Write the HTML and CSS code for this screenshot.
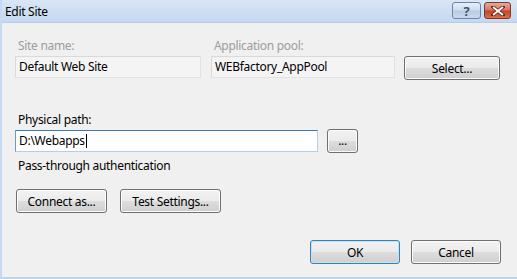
FILE: index.html
```html
<!DOCTYPE html>
<html>
  <head>
    <meta charset="utf-8">
    <title>Edit Site</title>
    <link rel="stylesheet" href="styles.css">
  </head>
  <body>
    <div class="window">
      <div class="titlebar">
        <span class="title">Edit Site</span>
        <div class="caption-btns">
          <div class="cap help">?</div>
          <div class="cap close">
            <svg width="14" height="10" viewBox="0 0 14 10">
              <path d="M2 1 L12 9 M12 1 L2 9" stroke="#5a1a10" stroke-width="3.4" stroke-linecap="square"/>
              <path d="M2 1 L12 9 M12 1 L2 9" stroke="#fff" stroke-width="2"/>
            </svg>
          </div>
        </div>
      </div>
      <div class="content">
        <div class="row top-row">
          <div class="field site">
            <div class="label disabled">Site name:</div>
            <div class="box ro">Default Web Site</div>
          </div>
          <div class="field pool">
            <div class="label disabled">Application pool:</div>
            <div class="box ro">WEBfactory_AppPool</div>
          </div>
          <button class="btn select">Select...</button>
        </div>

        <div class="label path-label">Physical path:</div>
        <div class="row path-row">
          <div class="box path">D:\Webapps<span class="caret"></span></div>
          <button class="btn dots">...</button>
        </div>
        <div class="label auth">Pass-through authentication</div>

        <div class="row conn-row">
          <button class="btn connect">Connect as...</button>
          <button class="btn test">Test Settings...</button>
        </div>

        <div class="row footer">
          <button class="btn ok">OK</button>
          <button class="btn cancel">Cancel</button>
        </div>
      </div>
    </div>
  </body>
</html>
```

FILE: styles.css
```css
* {
  margin: 0;
  padding: 0;
  box-sizing: border-box;
}
body {
  background: #f0f0f0;
  font-family: "Noto Sans", "Open Sans", sans-serif;
  font-size: 12px;
  letter-spacing: -0.3px;
  color: #000;
}
.window {
  width: 517px;
  height: 279px;
  border-left: 2px solid #c5d9f0;
  border-bottom: 2px solid #bcd3ee;
  background: #f0f0f0;
  display: flex;
  flex-direction: column;
}
.titlebar {
  height: 23px;
  background: linear-gradient(#d9e6f5, #c4d8ef);
  display: flex;
  align-items: center;
  justify-content: space-between;
  padding-left: 3px;
  border-bottom: 1px solid #b9cde5;
}
.title {
  font-size: 12px;
  line-height: 16px;
  margin-top: 1px;
}
.caption-btns {
  display: flex;
  gap: 3px;
  align-self: flex-start;
  margin-top: 2px;
  margin-right: 6px;
}
.cap {
  height: 17px;
  border: 1px solid #6d84a4;
  border-radius: 3px;
  display: flex;
  align-items: center;
  justify-content: center;
}
.help {
  width: 29px;
  background: linear-gradient(#e6eef8 0%, #cddcee 48%, #b7cbe3 52%, #c9daee 100%);
  color: #3d5272;
  font-size: 13px;
  font-weight: bold;
  line-height: 14px;
}
.close {
  width: 27px;
  border-color: #7a3a30;
  background: linear-gradient(#e9a99b 0%, #d9735f 48%, #c2442b 52%, #d6704f 100%);
}
.content {
  flex: 1;
  padding: 15px 0 0 13px;
}
.row {
  display: flex;
}
.label {
  line-height: 16px;
  padding-left: 3px;
  white-space: nowrap;
}
.label.disabled {
  color: #9d9d9d;
}
.box {
  height: 22px;
  line-height: 20px;
  padding-left: 3px;
  border: 1px solid #d5d5d5;
  white-space: nowrap;
  margin-top: 2px;
}
.box.ro {
  background: #f4f4f4;
  border-color: #d9d9d9 #e2e2e2 #e2e2e2 #d9d9d9;
}
.top-row {
  align-items: flex-end;
}
.site {
  width: 186px;
}
.pool {
  width: 184px;
  margin-left: 10px;
}
.btn {
  font-family: inherit;
  font-size: 12px;
  letter-spacing: inherit;
  color: #000;
  height: 24px;
  border: 1px solid #707070;
  border-radius: 3px;
  background: linear-gradient(#f2f2f2 0%, #ebebeb 50%, #dddddd 51%, #cfcfcf 100%);
  box-shadow: inset 0 0 0 1px #fbfbfb;
}
.select {
  width: 96px;
  margin-left: 9px;
  margin-bottom: -2px;
}
.path-label {
  margin-top: 34px;
}
.path-row {
  align-items: center;
  margin-top: 1px;
}
.box.path {
  width: 303px;
  margin-top: 0;
  background: #fff;
  border-color: #3d7bad #b5cfe7 #b5cfe7 #6b9cc7;
}
.caret {
  display: inline-block;
  width: 1px;
  height: 14px;
  margin-left: 1px;
  background: #000;
  vertical-align: -3px;
}
.dots {
  width: 31px;
  margin-left: 9px;
  line-height: 12px;
}
.auth {
  margin-top: 5px;
}
.conn-row {
  margin-top: 15px;
  gap: 13px;
  padding-left: 1px;
}
.connect {
  width: 91px;
}
.test {
  width: 101px;
}
.footer {
  margin-top: 27px;
  padding-left: 295px;
  gap: 11px;
}
.ok,
.cancel {
  width: 90px;
}
.ok {
  border-color: #3c7fb1;
  box-shadow: inset 0 0 0 1px #bfe6f8;
}
```
